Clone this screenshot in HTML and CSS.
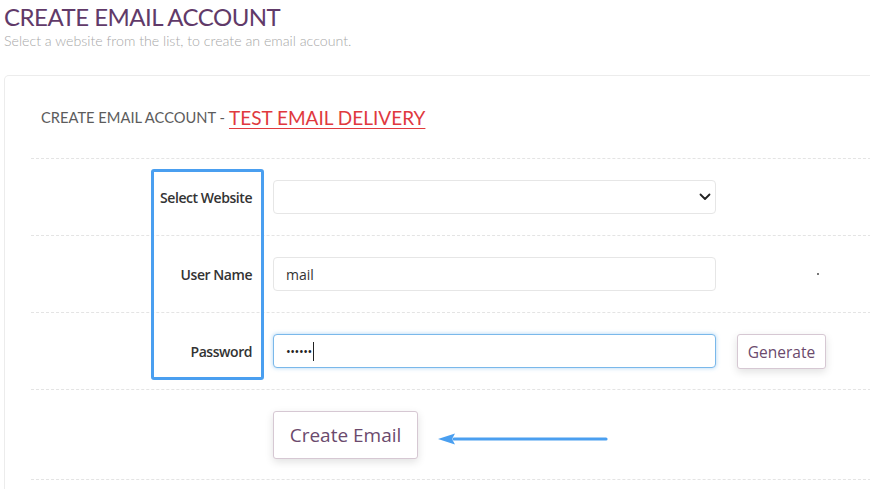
FILE: index.html
```html
<!DOCTYPE html>
<html>
<head>
<meta charset="utf-8">
<link rel="stylesheet" href="styles.css">
</head>
<body>
<div class="page">
  <h1 class="title">CREATE EMAIL ACCOUNT</h1>
  <p class="subtitle">Select a website from the list, to create an email account.</p>
  <div class="card">
    <h2 class="card-title">CREATE EMAIL ACCOUNT - <a class="link" href="#">TEST EMAIL DELIVERY</a></h2>
    <div class="form">
      <div class="highlight"></div>
      <div class="row">
        <label class="label">Select Website</label>
        <div class="select">
          <svg class="chev" width="12" height="8" viewBox="0 0 12 8"><path d="M1.5 1.5 L6 6 L10.5 1.5" fill="none" stroke="#222" stroke-width="1.8" stroke-linecap="round" stroke-linejoin="round"/></svg>
        </div>
        <div class="extra"></div>
      </div>
      <div class="row">
        <label class="label">User Name</label>
        <div class="input">mail</div>
        <div class="extra"><span class="dot"></span></div>
      </div>
      <div class="row">
        <label class="label">Password</label>
        <div class="input focus"><span class="pw">••••••</span><span class="caret"></span></div>
        <div class="extra"><button class="btn gen">Generate</button></div>
      </div>
      <div class="row last">
        <div class="label"></div>
        <div class="submit-cell">
          <button class="btn create">Create Email</button>
          <svg class="arrow" width="172" height="14" viewBox="0 0 172 14"><path d="M16 7 L168 7" stroke="#4a9ff0" stroke-width="3.2" stroke-linecap="round"/><path d="M0 7 L17 1.5 L14 7 L17 12.5 Z" fill="#4a9ff0"/></svg>
        </div>
        <div class="extra"></div>
      </div>
    </div>
  </div>
</div>
</body>
</html>
```
FILE: styles.css
```css
* { box-sizing: border-box; }
html, body { margin: 0; padding: 0; background: #fff; }
body { width: 870px; height: 489px; overflow: hidden; }
.page { padding: 0 0 0 4px; }
.title {
  margin: 0;
  padding-top: 3px;
  font-family: "Lato", "Open Sans", sans-serif;
  font-weight: 400;
  font-size: 24px;
  line-height: 28px;
  color: #613a69;
  letter-spacing: -0.5px;
}
.subtitle {
  margin: 1px 0 0;
  font-family: "Lato", sans-serif;
  font-weight: 300;
  font-size: 14.2px;
  line-height: 18px;
  color: #a8a8a8;
}
.card {
  margin-top: 25px;
  margin-right: -12px;
  border: 1px solid #ececec;
  border-bottom: 0;
  border-radius: 5px 5px 0 0;
  padding: 0 0 0 26px;
  height: 414px;
}
.card-title {
  margin: 0;
  height: 82px;
  display: flex;
  align-items: center;
  padding: 0 0 0 10px;
  font-family: "Lato", sans-serif;
  font-weight: 400;
  font-size: 14.7px;
  color: #5c5c5c;
}
.link {
  margin-left: 4px;
  font-size: 19px;
  font-weight: 400;
  color: #e0393e;
  text-decoration: underline;
  text-decoration-thickness: 1px;
  text-underline-offset: 3px;
}
.form { position: relative; }
.highlight {
  position: absolute;
  left: 120px;
  top: 11px;
  width: 113px;
  height: 211px;
  border: 3px solid #4a9ff0;
  border-radius: 3px;
  pointer-events: none;
}
.row {
  display: grid;
  grid-template-columns: 242px 443px 1fr;
  align-items: center;
  height: 77px;
  border-top: 1px dashed #e4e4e4;
}
.row.last { height: 91px; border-bottom: 1px dashed #e4e4e4; }
.label {
  text-align: right;
  padding-right: 21px;
  font-family: "Open Sans", sans-serif;
  font-weight: 600;
  font-size: 14px;
  letter-spacing: -0.45px;
  color: #333;
}
.select, .input {
  position: relative;
  height: 34px;
  border: 1px solid #e6e6e6;
  border-radius: 4px;
  background: #fff;
  padding: 0 12px;
  display: flex;
  align-items: center;
  font-family: "Open Sans", sans-serif;
  font-size: 14px;
  color: #333;
}
.chev { position: absolute; right: 4px; top: 12px; }
.input.focus {
  border-color: #7ab8ea;
  box-shadow: 0 0 4px rgba(102, 175, 233, 0.55);
}
.pw { font-size: 12.5px; letter-spacing: -0.4px; color: #222; }
.caret { width: 1px; height: 19px; background: #222; margin-left: 1px; }
.extra { display: flex; align-items: center; padding-left: 21px; }
.dot { width: 1.5px; height: 1.5px; background: #777; margin-left: 80px; }
.btn {
  font-family: "Open Sans", sans-serif;
  background: #fff;
  color: #6b4a6d;
  border: 1px solid #d6c8d3;
  border-radius: 3px;
  box-shadow: 0 3px 8px rgba(0, 0, 0, 0.12);
  cursor: pointer;
}
.gen { width: 89px; height: 35px; font-size: 15.5px; padding: 0; margin-top: 1px; }
.submit-cell { display: flex; align-items: center; }
.create { width: 145px; height: 48px; font-size: 19px; padding: 0; margin-top: 1px; }
.arrow { margin-left: 20px; margin-top: 8px; }
```
